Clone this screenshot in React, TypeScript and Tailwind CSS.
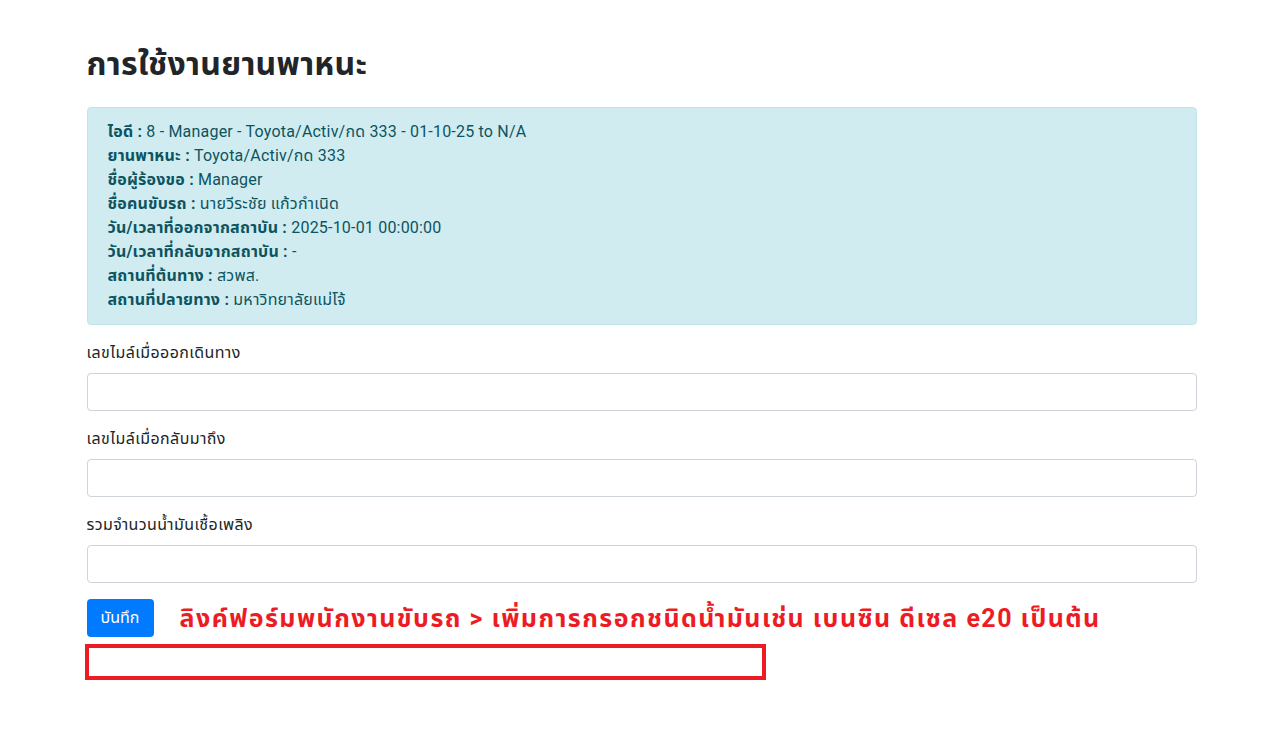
const info: [string, string][] = [
  ['ไอดี', '8 - Manager - Toyota/Activ/กด 333 - 01-10-25 to N/A'],
  ['ยานพาหนะ', 'Toyota/Activ/กด 333'],
  ['ชื่อผู้ร้องขอ', 'Manager'],
  ['ชื่อคนขับรถ', 'นายวีระชัย แก้วกำเนิด'],
  ['วัน/เวลาที่ออกจากสถาบัน', '2025-10-01 00:00:00'],
  ['วัน/เวลาที่กลับจากสถาบัน', '-'],
  ['สถานที่ต้นทาง', 'สวพส.'],
  ['สถานที่ปลายทาง', 'มหาวิทยาลัยแม่โจ้'],
];

const fields = ['เลขไมล์เมื่อออกเดินทาง', 'เลขไมล์เมื่อกลับมาถึง', 'รวมจำนวนน้ำมันเชื้อเพลิง'];

export default function App() {
  return (
    <div className="min-h-screen bg-white text-[#212529] font-['Segoe_UI','Roboto','Noto_Sans','Noto_Sans_Thai',sans-serif] text-base leading-normal">
      <div className="mx-auto w-[1140px] px-[15px] pt-[45px]">
        <h2 className="mb-6 text-[32px] font-bold leading-[1.2] tracking-[0.3px]">การใช้งานยานพาหนะ</h2>

        <div className="mb-4 rounded border border-[#bee5eb] bg-[#d1ecf1] px-5 py-3 text-[#0c5460] tracking-[0.2px]">
          {info.map(([k, v]) => (
            <div key={k}>
              <b>{k} :</b> {v}
            </div>
          ))}
        </div>

        {fields.map((f) => (
          <div key={f} className="mb-4">
            <label className="mb-2 block tracking-[0.4px]">{f}</label>
            <input className="block h-[38px] w-full rounded border border-[#ced4da] px-3 outline-none" />
          </div>
        ))}

        <div className="flex items-center gap-[26px]">
          <button className="h-[38px] w-[67px] rounded bg-[#007bff] text-white">บันทึก</button>
          <span className="text-[25px] font-bold tracking-[1.45px] text-[#ed1c24]">
            ลิงค์ฟอร์มพนักงานขับรถ &gt; เพิ่มการกรอกชนิดน้ำมันเช่น เบนซิน ดีเซล e20 เป็นต้น
          </span>
        </div>
        <div className="-ml-[2px] mt-[7px] h-[36px] w-[681px] border-4 border-[#ed1c24]" />
      </div>
    </div>
  );
}
